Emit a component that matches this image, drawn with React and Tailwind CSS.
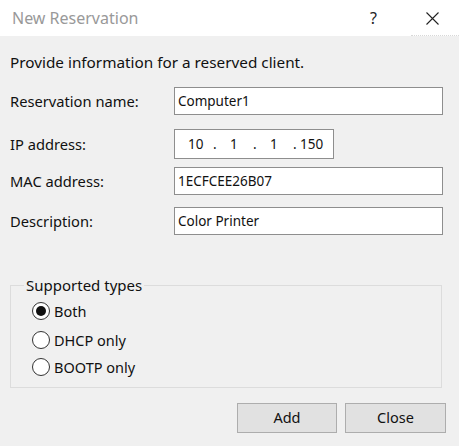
import React from "react";

const font = { fontFamily: '"Noto Sans", "Open Sans", sans-serif' };

function Field({ label, value, mt }) {
  return (
    <div className={`flex items-center ${mt}`}>
      <div className="w-[164px] text-[14.7px] text-[#111]">{label}</div>
      <div className="h-[28px] w-[269px] border border-[#8e8e8e] bg-white flex items-center pl-[3px] text-[13.5px] text-[#111]">
        {value}
      </div>
    </div>
  );
}

function Radio({ checked, label, mt }) {
  return (
    <div className={`flex items-center h-[20px] ${mt}`}>
      <div className="w-[18px] h-[18px] rounded-full border border-[#333] bg-white flex items-center justify-center">
        {checked && <div className="w-[10px] h-[10px] rounded-full bg-[#111]" />}
      </div>
      <div className="ml-[4px] text-[14.5px] leading-[20px] text-[#111]">{label}</div>
    </div>
  );
}

export default function App() {
  return (
    <div className="w-[459px] h-[446px] bg-[#f0f0f0] overflow-hidden" style={font}>
      <div className="h-[36px] bg-white flex items-center relative">
        <div className="ml-[12px] text-[16px] text-[#999]">New Reservation</div>
        <div className="absolute left-[370px] top-[6px] text-[16px] text-[#222]">?</div>
        <svg className="absolute left-[426px] top-[12px]" width="13" height="13" viewBox="0 0 13 13">
          <path d="M0.5 0.5 L12.5 12.5 M12.5 0.5 L0.5 12.5" stroke="#222" strokeWidth="1.1" />
        </svg>
        <div className="absolute right-0 bottom-0 w-[48px] border-b border-dotted border-[#d8d8d8]" />
      </div>
      <div className="px-[10px]">
        <div className="pt-[16px] h-[36px] text-[15.3px] text-[#111] leading-[20px] whitespace-nowrap">
          Provide information for a reserved client.
        </div>
        <Field label="Reservation name:" value="Computer1" mt="mt-[15px]" />
        <div className="flex items-center mt-[14px]">
          <div className="w-[164px] text-[14.7px] text-[#111]">IP address:</div>
          <div className="h-[30px] w-[160px] border border-[#8e8e8e] bg-white flex items-center text-[13.5px] text-[#111]">
            <span className="ml-[13px] w-[25px]">10</span>
            <span className="w-[17px]">.</span>
            <span className="w-[23px]">1</span>
            <span className="w-[17px]">.</span>
            <span className="w-[23px]">1</span>
            <span className="w-[7px]">.</span>
            <span>150</span>
          </div>
        </div>
        <Field label="MAC address:" value="1ECFCEE26B07" mt="mt-[8px]" />
        <Field label="Description:" value="Color Printer" mt="mt-[12px]" />

        <fieldset className="mt-[40px] w-[432px] h-[113px] border border-[#dcdcdc]">
          <legend className="ml-[13px] px-[2px] text-[15px] leading-[20px] text-[#111]">Supported types</legend>
          <div className="pl-[21px]">
            <Radio checked label="Both" mt="mt-[6px]" />
            <Radio label="DHCP only" mt="mt-[9px]" />
            <Radio label="BOOTP only" mt="mt-[7px]" />
          </div>
        </fieldset>

        <div className="flex justify-end gap-[8px] mt-[15px] pr-[3px]">
          <button className="w-[100px] h-[30px] bg-[#e1e1e1] border border-[#adadad] text-[14.5px] text-[#111]">Add</button>
          <button className="w-[101px] h-[30px] bg-[#e1e1e1] border border-[#adadad] text-[14.5px] text-[#111]">Close</button>
        </div>
      </div>
    </div>
  );
}
